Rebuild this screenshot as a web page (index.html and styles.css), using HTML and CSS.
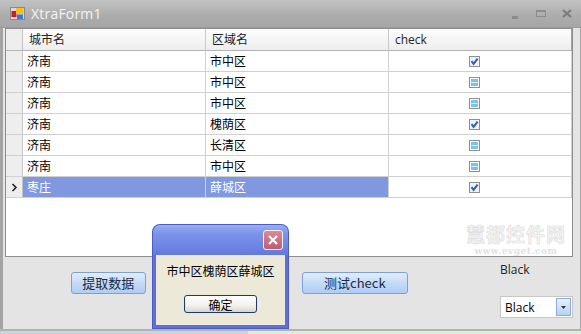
FILE: index.html
```html
<!DOCTYPE html>
<html>
<head>
<meta charset="utf-8">
<link rel="stylesheet" href="styles.css">
</head>
<body>
<div class="window">
  <div class="titlebar">
    <svg class="appicon" width="15" height="13" viewBox="0 0 15 13">
      <rect x="0.5" y="0.5" width="14" height="12" fill="#d8d8d8" stroke="#8a8a8a"/>
      <rect x="1.5" y="4" width="5" height="6" fill="#c82020"/>
      <rect x="6" y="1" width="7.5" height="6" fill="#f2c21a"/>
      <rect x="7" y="7.5" width="6" height="4.5" fill="#3a78d8"/>
    </svg>
    <span class="title">XtraForm1</span>
    <div class="tbtns">
      <span class="tb-min"></span>
      <span class="tb-max"></span>
      <svg class="tb-close" width="10" height="9" viewBox="0 0 10 9"><path d="M1 1 L9 8 M9 1 L1 8" stroke="#7a7a7a" stroke-width="2"/></svg>
    </div>
  </div>
  <div class="client">
    <div class="grid">
      <div class="row head">
        <div class="cell ind"></div>
        <div class="cell">城市名</div>
        <div class="cell">区域名</div>
        <div class="cell">check</div>
      </div>
      <div class="row"><div class="cell ind"></div><div class="cell">济南</div><div class="cell">市中区</div><div class="cell chk"><svg class="cb" width="11" height="11" viewBox="0 0 11 11"><rect x="0.5" y="0.5" width="10" height="10" fill="#eef2f8" stroke="#8f8f8f"/><path d="M2.5 5.2 L4.6 7.8 L8.6 2.6" fill="none" stroke="#2e5cb8" stroke-width="2"/></svg></div></div>
      <div class="row"><div class="cell ind"></div><div class="cell">济南</div><div class="cell">市中区</div><div class="cell chk"><svg class="cb" width="11" height="11" viewBox="0 0 11 11"><rect x="0.5" y="0.5" width="10" height="10" fill="#ffffff" stroke="#8f8f8f"/><rect x="2" y="2" width="7" height="7" fill="#7cc2ee"/><path d="M2.5 5.5 H8.5" stroke="#d6eefc" stroke-width="1"/></svg></div></div>
      <div class="row"><div class="cell ind"></div><div class="cell">济南</div><div class="cell">市中区</div><div class="cell chk"><svg class="cb" width="11" height="11" viewBox="0 0 11 11"><rect x="0.5" y="0.5" width="10" height="10" fill="#ffffff" stroke="#8f8f8f"/><rect x="2" y="2" width="7" height="7" fill="#7cc2ee"/><path d="M2.5 5.5 H8.5" stroke="#d6eefc" stroke-width="1"/></svg></div></div>
      <div class="row"><div class="cell ind"></div><div class="cell">济南</div><div class="cell">槐荫区</div><div class="cell chk"><svg class="cb" width="11" height="11" viewBox="0 0 11 11"><rect x="0.5" y="0.5" width="10" height="10" fill="#eef2f8" stroke="#8f8f8f"/><path d="M2.5 5.2 L4.6 7.8 L8.6 2.6" fill="none" stroke="#2e5cb8" stroke-width="2"/></svg></div></div>
      <div class="row"><div class="cell ind"></div><div class="cell">济南</div><div class="cell">长清区</div><div class="cell chk"><svg class="cb" width="11" height="11" viewBox="0 0 11 11"><rect x="0.5" y="0.5" width="10" height="10" fill="#ffffff" stroke="#8f8f8f"/><rect x="2" y="2" width="7" height="7" fill="#7cc2ee"/><path d="M2.5 5.5 H8.5" stroke="#d6eefc" stroke-width="1"/></svg></div></div>
      <div class="row"><div class="cell ind"></div><div class="cell">济南</div><div class="cell">市中区</div><div class="cell chk"><svg class="cb" width="11" height="11" viewBox="0 0 11 11"><rect x="0.5" y="0.5" width="10" height="10" fill="#ffffff" stroke="#8f8f8f"/><rect x="2" y="2" width="7" height="7" fill="#7cc2ee"/><path d="M2.5 5.5 H8.5" stroke="#d6eefc" stroke-width="1"/></svg></div></div>
      <div class="row sel"><div class="cell ind"><svg width="7" height="9" viewBox="0 0 7 9"><path d="M1.5 1 L5 4.5 L1.5 8" fill="none" stroke="#222" stroke-width="1.6"/></svg></div><div class="cell">枣庄</div><div class="cell">薛城区</div><div class="cell chk focus"><svg class="cb" width="11" height="11" viewBox="0 0 11 11"><rect x="0.5" y="0.5" width="10" height="10" fill="#eef2f8" stroke="#8f8f8f"/><path d="M2.5 5.2 L4.6 7.8 L8.6 2.6" fill="none" stroke="#2e5cb8" stroke-width="2"/></svg></div></div>
      <div class="watermark"><span class="wm-big">慧都控件网</span><span class="wm-small">www.evget.com</span></div>
    </div>
    <div class="panel">
      <button class="btn btn-fetch">提取数据</button>
      <button class="btn btn-test">测试check</button>
      <div class="rightcol">
        <span class="lbl">Black</span>
        <div class="combo"><span class="combo-text">Black</span><span class="combo-btn"><svg width="5" height="3" viewBox="0 0 5 3"><path d="M0 0 H5 L2.5 3 Z" fill="#333"/></svg></span></div>
      </div>
    </div>
  </div>
  <div class="strip"><span class="strip-a"></span><span class="strip-b"></span></div>
  <div class="dialog">
    <div class="dlg-title"><span class="dlg-close"><svg width="12" height="12" viewBox="0 0 12 12"><path d="M2 2 L10 10 M10 2 L2 10" stroke="#fff" stroke-width="2.2"/></svg></span></div>
    <div class="dlg-body">
      <div class="dlg-msg">市中区槐荫区薛城区</div>
      <button class="dlg-ok">确定</button>
    </div>
  </div>
</div>
</body>
</html>
```
FILE: styles.css
```css
* { box-sizing: border-box; }
html, body { margin: 0; padding: 0; }
body {
  width: 581px; height: 334px; overflow: hidden;
  font-family: "Open Sans", "Noto Sans CJK SC", sans-serif;
  font-size: 12px; color: #000;
}
.window {
  position: relative;
  width: 581px; height: 334px;
  display: flex; flex-direction: column;
  background: #a8a8a8;
}
.titlebar {
  height: 28px; flex: none;
  display: flex; align-items: center;
  padding-left: 10px;
  background: linear-gradient(#c2c2c2, #acacac 60%, #a6a6a6);
  border-bottom: 1px solid #9a9a9a;
}
.appicon { display: block; margin-top: -1px; }
.title {
  margin-left: 6px; font-size: 14px; color: #f2f2f2;
  font-family: "Open Sans", sans-serif; letter-spacing: 0.2px;
  text-shadow: 0 0 2px #b8b8b8;
}
.tbtns { margin-left: auto; display: flex; align-items: center; padding-right: 9px; }
.tb-min { width: 6px; height: 3px; background: #8c8c8c; margin-top: 7px; }
.tb-max { width: 10px; height: 7px; border: 1px solid #8c8c8c; border-top-width: 2px; margin-left: 18px; }
.tb-close { display: block; margin-left: 16px; }
.client {
  flex: none; height: 301px;
  padding: 0 7px 0 2px;
  background: #e4e4e4;
  border-left: 3px solid #a4a4a4;
  border-right: 1px solid #a4a4a4;
  display: flex; flex-direction: column;
}
.grid {
  position: relative;
  height: 229px; flex: none;
  background: #fff;
  border: 1px solid #8e8e8e;
}
.row {
  display: grid;
  grid-template-columns: 17px 183px 183px 1fr;
  height: 21px;
}
.row.head { height: 22px; background: linear-gradient(#fdfdfd, #ededed); }
.cell {
  border-right: 1px solid #d0d0d0;
  border-bottom: 1px solid #d0d0d0;
  padding-left: 4px;
  line-height: 20px;
  white-space: nowrap; overflow: hidden;
  font-family: "Noto Sans CJK SC", sans-serif;
  font-size: 12px;
}
.head .cell {
  border-bottom-color: #b4b4b4; border-right-color: #c8c8c8;
  line-height: 21px; padding-left: 6px; color: #222;
  font-family: "Open Sans", "Noto Sans CJK SC", sans-serif;
  font-size: 12px;
}
.head .cell:last-child { border-right: 1px solid #a0a0a0; }
.cell.ind { background: #eeeeee; border-right-color: #c4c4c4; padding: 0; display: flex; align-items: center; justify-content: center; }
.cell.chk { display: flex; align-items: center; justify-content: center; padding: 0; padding-right: 12px; }
.cb { display: block; }
.sel .cell { background: #7f98df; color: #fff; }
.sel .cell.ind { background: #eeeeee; }
.sel .cell.focus { background: #fff; }
.watermark {
  position: absolute; left: 460px; top: 194px;
  display: flex; flex-direction: column; align-items: center;
  white-space: nowrap;
  color: #ececec;
}
.wm-big { font-size: 19px; line-height: 21px; height: 21px; font-family: "Noto Sans CJK SC", sans-serif; font-weight: 700; letter-spacing: 1px; -webkit-text-stroke: 0.6px #dedede; color: #f4f4f4; }
.wm-small { font-size: 9px; line-height: 10px; height: 10px; font-family: "DejaVu Serif", serif; font-weight: 700; color: #e2e2e2; margin-top: 2px; letter-spacing: 0.5px; }
.panel {
  flex: 1;
  display: flex; align-items: flex-start;
}
.btn {
  margin: 15px 0 0 0; padding: 0;
  height: 22px;
  border: 1px solid #7f9fd0; border-radius: 3px;
  background: linear-gradient(#e2eefc, #c4dbf7 50%, #aecdf3);
  font-family: "Noto Sans CJK SC", "Open Sans", sans-serif;
  font-size: 13px; color: #1e2a44; line-height: 20px;
}
.btn-fetch { margin-left: 66px; width: 75px; }
.btn-test { margin-left: 156px; width: 107px; font-family: "Noto Sans CJK SC", sans-serif; }
.rightcol { margin-left: 92px; display: flex; flex-direction: column; align-items: flex-start; }
.lbl { margin-top: 6px; font-size: 12px; color: #222; line-height: 14px; }
.combo {
  margin-top: 19px; width: 73px; height: 22px;
  background: #fff; border: 1px solid #c6c6c6;
  display: flex; align-items: center;
}
.combo-text { padding-left: 4px; font-size: 12px; color: #000; }
.combo-btn {
  margin-left: auto; margin-right: 1px;
  width: 15px; height: 18px;
  border: 1px solid #8eaad6;
  background: linear-gradient(#e6f0fc, #b6d2f4);
  display: flex; align-items: center; justify-content: center;
}
.combo-btn svg { display: block; }
.strip {
  flex: 1; display: flex;
  border-top: 2px solid #b2b2b2;
}
.strip-a { width: 248px; background: #c8d4e6; }
.strip-b { flex: 1; background: #d8eed8; }
.dialog {
  position: absolute; left: 153px; top: 225px;
  width: 135px; height: 103px;
  display: flex; flex-direction: column;
  border-radius: 7px 7px 0 0;
  background: #5e70d8;
  padding: 0 3px 3px 3px;
  box-shadow: 0 0 0 1px #4c5cc6;
}
.dlg-title {
  height: 30px; flex: none;
  margin: 0 -3px;
  border-radius: 7px 7px 0 0;
  background: linear-gradient(#9aaef4, #7b93ea 30%, #6a82e2 80%, #6378dc);
  display: flex; align-items: center; justify-content: flex-end;
  padding-right: 5px;
}
.dlg-close {
  width: 20px; height: 20px;
  border: 1px solid #f2f2f2; border-radius: 3px;
  background: linear-gradient(#d88c98, #bd5d6e);
  display: flex; align-items: center; justify-content: center;
}
.dlg-close svg { display: block; }
.dlg-body {
  flex: 1; background: #ece9d8;
  display: flex; flex-direction: column; align-items: center;
}
.dlg-msg {
  margin-top: 8px; font-size: 12px; line-height: 16px;
  font-family: "Noto Sans CJK SC", sans-serif; color: #000;
}
.dlg-ok {
  margin-top: 16px; width: 73px; height: 18px; padding: 0;
  border: 1px solid #1c3a72; border-radius: 3px;
  background: linear-gradient(#ffffff, #f2f1ea 60%, #d8d6cc);
  font-family: "Noto Sans CJK SC", sans-serif; font-size: 12px; line-height: 15px; color: #000;
}
```
